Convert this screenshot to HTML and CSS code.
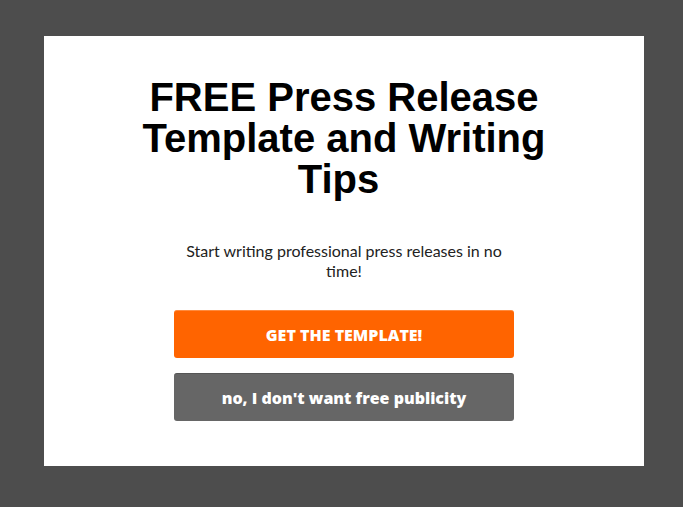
FILE: index.html
```html
<!DOCTYPE html>
<html lang="en">
<head>
    <meta charset="UTF-8">
    <meta name="viewport" content="width=device-width, initial-scale=1.0">
    <title>Free Press Release Template</title>
    <link rel="stylesheet" href="styles.css">
</head>
<body>

    <div class="popup">
        <h1 class="popup-title">FREE Press Release Template and Writing Tips&nbsp;</h1>
        <p class="popup-text">Start writing professional press releases in no time!</p>

        <div class="popup-buttons">
            <button class="btn btn-primary">GET THE TEMPLATE!</button>
            <button class="btn btn-secondary">no, I don't want free publicity</button>
        </div>
    </div>

</body>
</html>
```

FILE: styles.css
```css
body {
  margin: 0;
  padding: 36px 0 0 44px;
  height: 100vh;
  box-sizing: border-box;
  background-color: #4d4d4d;
  font-family: "Liberation Sans", Arial, sans-serif;
}

.popup {
  width: 600px;
  height: 430px;
  box-sizing: border-box;
  padding-top: 41px;
  background: #fff;
  display: flex;
  flex-direction: column;
  align-items: center;
}

.popup-title {
  width: 420px;
  margin: 0;
  font-size: 40px;
  line-height: 41px;
  font-weight: bold;
  text-align: center;
  color: #000;
}

.popup-text {
  width: 340px;
  margin: 41px 0 0;
  font-family: Lato, "Noto Sans", sans-serif;
  font-size: 16px;
  line-height: 20px;
  text-align: center;
  color: #222;
}

.popup-buttons {
  margin-top: 29px;
  display: flex;
  flex-direction: column;
  gap: 15px;
}

.btn {
  width: 340px;
  height: 48px;
  border: 0;
  border-radius: 3px;
  font-family: "Open Sans", sans-serif;
  font-size: 16px;
  font-weight: 800;
  color: #fff;
  cursor: pointer;
}

.btn-primary {
  background: #ff6400;
  border-top: 1px solid #ff8a3d;
}

.btn-secondary {
  background: #666;
  border-top: 1px solid #555;
}
```
